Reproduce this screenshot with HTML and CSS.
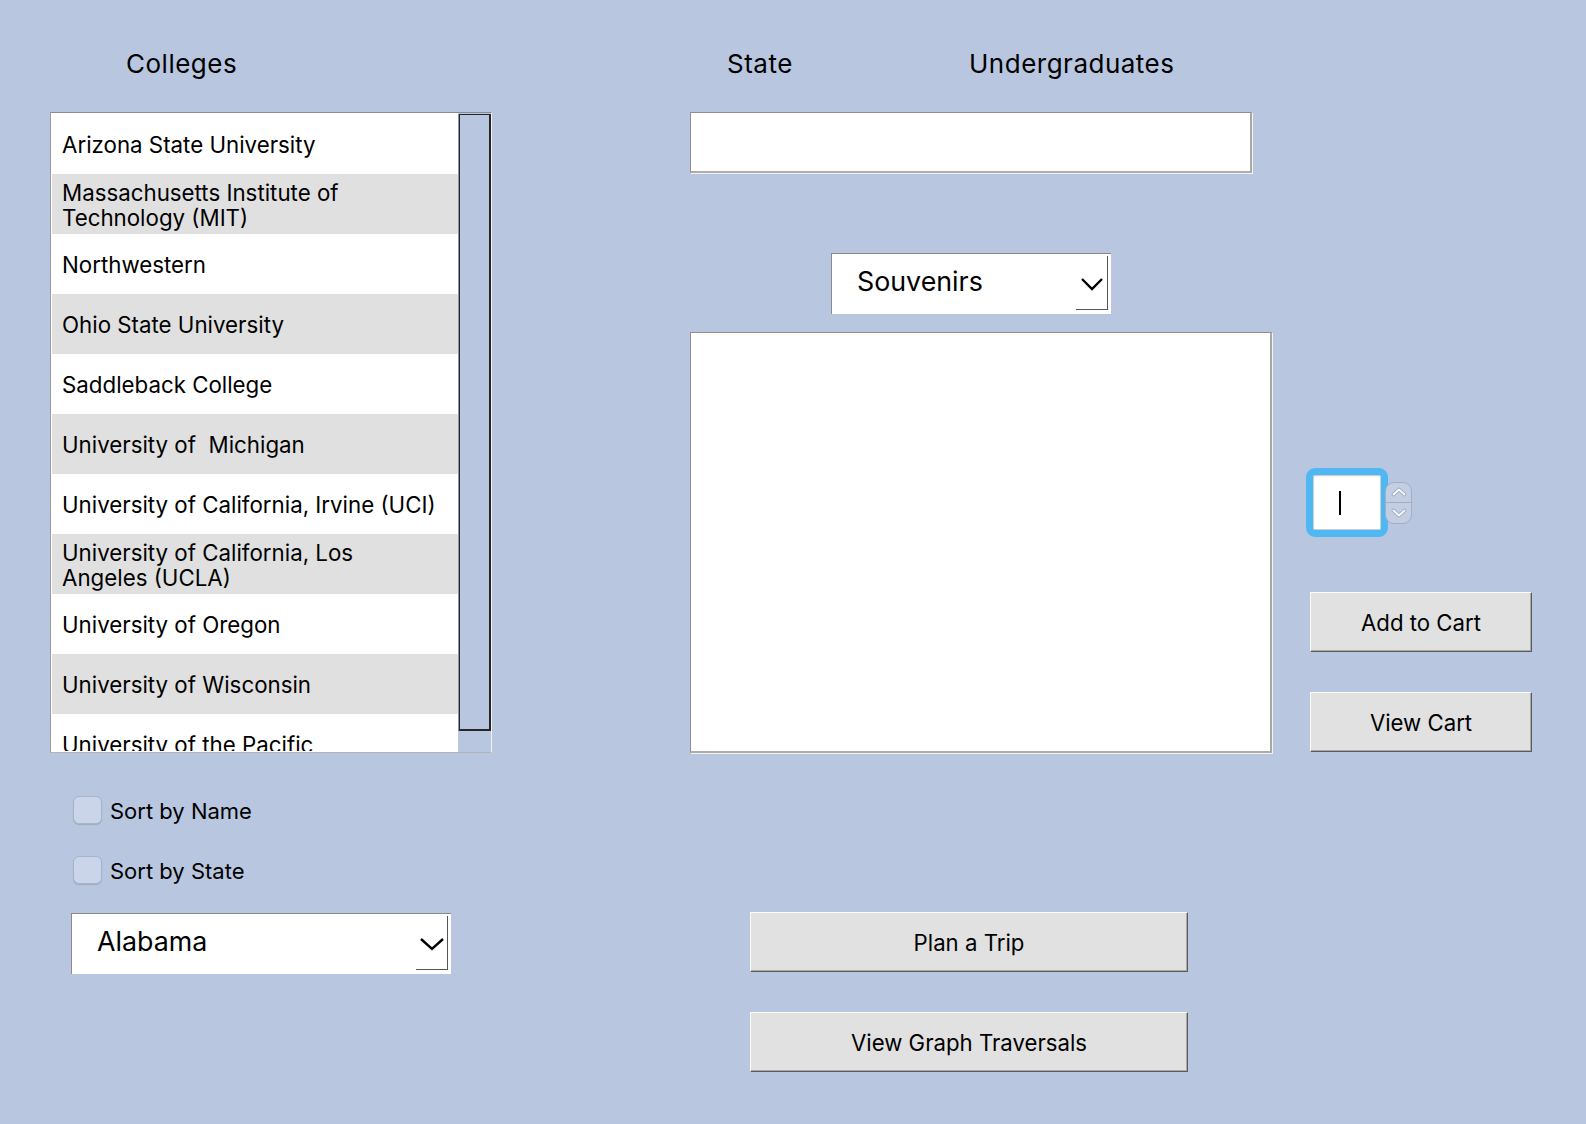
FILE: index.html
```html
<!DOCTYPE html>
<html lang="en">
<head>
<meta charset="utf-8">
<title>Colleges</title>
<link rel="stylesheet" href="styles.css">
</head>
<body>
<div class="app">
  <section class="col col-left">
    <h2 class="heading heading-colleges">Colleges</h2>
    <div class="listbox">
      <ul class="list">
        <li class="row">Arizona State University</li>
        <li class="row alt">Massachusetts Institute of<br>Technology (MIT)</li>
        <li class="row">Northwestern</li>
        <li class="row alt">Ohio State University</li>
        <li class="row">Saddleback College</li>
        <li class="row alt">University of  Michigan</li>
        <li class="row">University of California, Irvine (UCI)</li>
        <li class="row alt">University of California, Los<br>Angeles (UCLA)</li>
        <li class="row">University of Oregon</li>
        <li class="row alt">University of Wisconsin</li>
        <li class="row">University of the Pacific</li>
      </ul>
      <div class="scrollbar"><div class="thumb"></div></div>
    </div>
    <label class="check check-first"><span class="box"></span>Sort by Name</label>
    <label class="check check-second"><span class="box"></span>Sort by State</label>
    <div class="combo combo-state">
      <span class="combo-label">Alabama</span>
      <span class="combo-arrow"><svg width="26" height="14" viewBox="0 0 26 14"><polyline points="2,2 13,12 24,2" fill="none" stroke="#000" stroke-width="2.4"/></svg></span>
    </div>
  </section>

  <section class="col col-mid">
    <div class="mid-heads">
      <h2 class="heading h-state">State</h2>
      <h2 class="heading">Undergraduates</h2>
    </div>
    <div class="field textfield"></div>
    <div class="combo combo-souvenirs">
      <span class="combo-label">Souvenirs</span>
      <span class="combo-arrow"><svg width="24" height="14" viewBox="0 0 24 14"><polyline points="2,2 12,12 22,2" fill="none" stroke="#000" stroke-width="2.4"/></svg></span>
    </div>
    <div class="field textarea"></div>
    <button class="btn btn-wide btn-trip">Plan a Trip</button>
    <button class="btn btn-wide btn-graph">View Graph Traversals</button>
  </section>

  <section class="col col-right">
    <div class="spinner">
      <div class="spin-field"><span class="caret"></span></div>
      <div class="spin-buttons">
        <span class="spin-half"><svg width="16" height="10" viewBox="0 0 16 10"><polyline points="2.5,7.5 8,2.5 13.5,7.5" fill="none" stroke="#95a2bb" stroke-width="3.6" stroke-linecap="round" stroke-linejoin="round"/><polyline points="2.5,7.5 8,2.5 13.5,7.5" fill="none" stroke="#f6f8fc" stroke-width="2" stroke-linecap="round" stroke-linejoin="round"/></svg></span>
        <span class="spin-half spin-down"><svg width="16" height="10" viewBox="0 0 16 10"><polyline points="2.5,2.5 8,7.5 13.5,2.5" fill="none" stroke="#95a2bb" stroke-width="3.6" stroke-linecap="round" stroke-linejoin="round"/><polyline points="2.5,2.5 8,7.5 13.5,2.5" fill="none" stroke="#f6f8fc" stroke-width="2" stroke-linecap="round" stroke-linejoin="round"/></svg></span>
      </div>
    </div>
    <button class="btn btn-side btn-add">Add to Cart</button>
    <button class="btn btn-side btn-view">View Cart</button>
  </section>
</div>
</body>
</html>
```

FILE: styles.css
```css
html, body {
  margin: 0;
  padding: 0;
}
body {
  background: #b8c7df;
  font-family: Inter, "Liberation Sans", sans-serif;
  color: #000;
  width: 1586px;
  height: 1124px;
  overflow: hidden;
}
.app {
  display: flex;
  align-items: flex-start;
  padding: 49px 0 0 50px;
}
.col {
  display: flex;
  flex-direction: column;
  align-items: flex-start;
}
.heading {
  margin: 0;
  font-weight: 400;
  font-size: 26px;
  letter-spacing: 0.5px;
  line-height: 30px;
  height: 30px;
  white-space: nowrap;
}
.col-left {
  width: 442px;
}
.heading-colleges {
  padding-left: 76px;
}
.listbox {
  margin-top: 33px;
  display: flex;
  width: 442px;
  height: 641px;
  box-sizing: border-box;
  border-top: 1px solid #8c8c8c;
  border-left: 1px solid #9c9c9c;
  border-right: 1px solid #f2f2f2;
  border-bottom: 1px solid #b3b3b3;
  padding-left: 1px;
  background: #fff;
}
.list {
  list-style: none;
  margin: 1px 0;
  padding: 0;
  width: 406px;
  height: 637px;
  overflow: hidden;
  background: #fff;
}
.row {
  height: 60px;
  box-sizing: border-box;
  display: flex;
  align-items: center;
  padding: 1px 0 0 10px;
  font-size: 22.3px;
  line-height: 25px;
  white-space: pre;
}
.row.alt {
  background: #e0e0e0;
}
.scrollbar {
  width: 33px;
  height: 639px;
  box-sizing: border-box;
  padding-top: 1px;
  background: #b8c7df;
}
.thumb {
  margin-left: 1px;
  width: 32px;
  height: 617px;
  box-sizing: border-box;
  border: 1px solid #262626;
  border-right-width: 2px;
  border-bottom-width: 2px;
  box-shadow: -1px 0 0 #8d97a8;
}
.check {
  display: flex;
  align-items: center;
  gap: 8px;
  height: 40px;
  box-sizing: border-box;
  padding-top: 1px;
  margin-left: 23px;
  font-size: 22px;
}
.check-first {
  margin-top: 37px;
}
.check-second {
  margin-top: 20px;
}
.box {
  width: 29px;
  height: 28px;
  margin-top: -1px;
  box-sizing: border-box;
  border-radius: 6px;
  background: #cad5e9;
  border: 1px solid #a7b3ca;
  box-shadow: 0 1px 1px rgba(0, 0, 0, 0.14);
}
.combo {
  display: flex;
  box-sizing: border-box;
  height: 61px;
  background: #fff;
  border-top: 1px solid #8a8a8a;
  border-left: 1px solid #8a8a8a;
  padding: 2px 3px 4px 25px;
}
.combo-label {
  flex: 1;
  display: flex;
  align-items: center;
  padding-bottom: 4px;
  font-size: 26.8px;
  line-height: 30px;
}
.combo-arrow {
  width: 31px;
  display: flex;
  align-items: center;
  justify-content: center;
  padding-top: 3px;
  border-right: 1px solid #555;
  border-bottom: 1px solid #555;
}
.combo-state {
  margin-top: 23px;
  margin-left: 21px;
  width: 380px;
}
.col-mid {
  margin-left: 198px;
  width: 582px;
}
.mid-heads {
  display: flex;
  padding-left: 37px;
}
.h-state {
  width: 242px;
}
.field {
  box-sizing: border-box;
  background: #fff;
  border-top: 1px solid #8f8f8f;
  border-left: 1px solid #8f8f8f;
  border-right: 2px solid #a8a8a8;
  border-bottom: 2px solid #acacac;
  box-shadow: 1px 1px 0 #f4f4f4;
}
.textfield {
  margin-top: 33px;
  width: 562px;
  height: 61px;
}
.combo-souvenirs {
  margin-top: 80px;
  margin-left: 141px;
  width: 280px;
}
.textarea {
  margin-top: 18px;
  width: 582px;
  height: 421px;
}
.btn {
  box-sizing: border-box;
  display: flex;
  align-items: center;
  justify-content: center;
  height: 60px;
  padding: 0;
  margin: 0;
  background: #e1e1e1;
  border-top: 1px solid #fbfbfb;
  border-left: 1px solid #fbfbfb;
  border-right: 1px solid #5c5c5c;
  border-bottom: 1px solid #5c5c5c;
  box-shadow: inset -1px -1px 0 #a9a9a9;
  font-family: Inter, "Liberation Sans", sans-serif;
  font-size: 22.2px;
  color: #000;
}
.btn-wide {
  width: 438px;
  margin-left: 60px;
}
.btn-trip {
  margin-top: 159px;
}
.btn-graph {
  margin-top: 40px;
}
.col-right {
  margin-left: 34px;
  padding-top: 419px;
}
.spinner {
  display: flex;
  align-items: center;
}
.spin-field {
  width: 82px;
  height: 69px;
  box-sizing: border-box;
  border: 7px solid #4fb7f2;
  border-radius: 9px;
  background: #fff;
  box-shadow: inset 0 0 0 1px #cfcfcf, inset 0 2px 2px rgba(0, 0, 0, 0.06);
  display: flex;
  align-items: center;
  padding-left: 26px;
}
.caret {
  width: 2px;
  height: 24px;
  background: #000;
}
.spin-buttons {
  margin-left: -3px;
  width: 27px;
  height: 42px;
  box-sizing: border-box;
  border-radius: 9px;
  background: #c3cee3;
  border: 1px solid #a1aec6;
  display: flex;
  flex-direction: column;
  overflow: hidden;
}
.spin-half {
  flex: 1;
  display: flex;
  align-items: center;
  justify-content: center;
}
.spin-down {
  border-top: 1px solid #a1aec6;
}
.btn-side {
  width: 222px;
  margin-left: 4px;
}
.btn-add {
  margin-top: 55px;
}
.btn-view {
  margin-top: 40px;
}
```
